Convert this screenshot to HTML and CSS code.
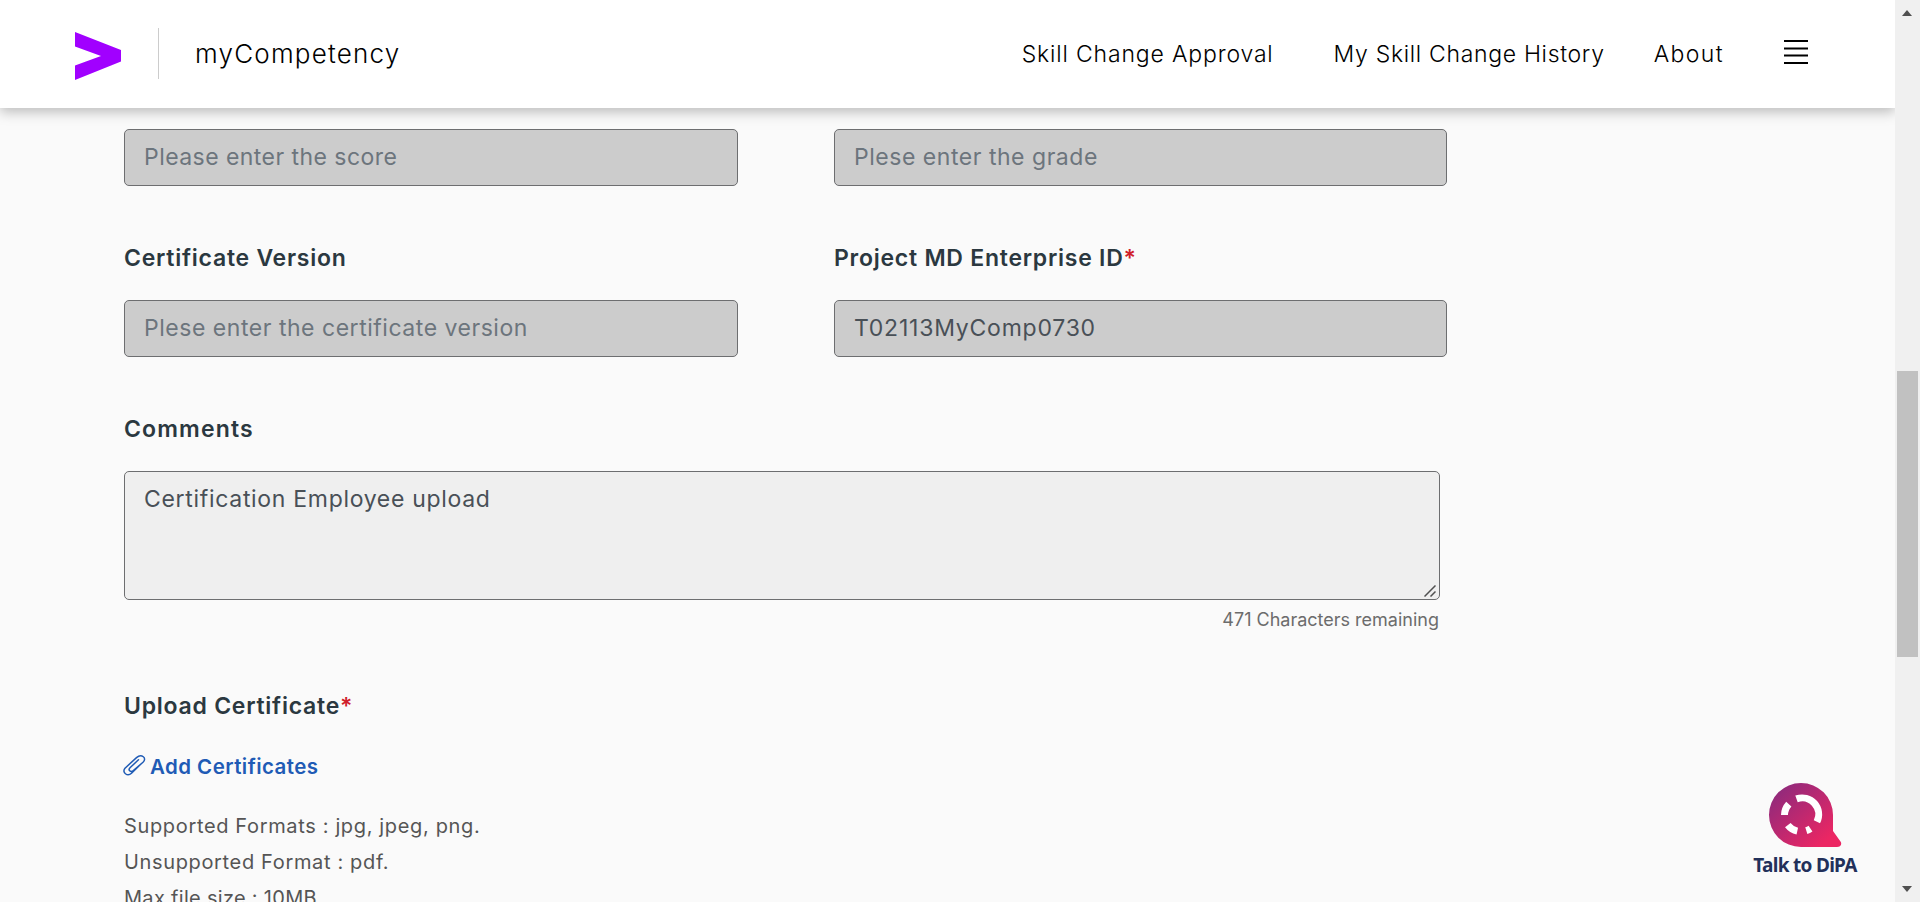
FILE: index.html
```html
<!DOCTYPE html>
<html lang="en">
<head>
<meta charset="utf-8">
<title>myCompetency</title>
<link rel="stylesheet" href="styles.css">
</head>
<body>
<div class="page">
  <header class="header">
    <svg class="logo" viewBox="0 0 46 48"><path fill="#a100ff" d="M0 0 46 18V29.500L0 48V33.500L26 24 0 14.500Z"/></svg>
    <span class="divider"></span>
    <span class="brand">myCompetency</span>
    <nav class="nav">
      <a class="nav-link approval">Skill Change Approval</a>
      <a class="nav-link history">My Skill Change History</a>
      <a class="nav-link about">About</a>
      <svg class="menu" viewBox="0 0 24 26"><path stroke="#000" stroke-width="2" d="M0 2H24M0 9.500H24M0 16.500H24M0 24H24"/></svg>
    </nav>
  </header>
  <main class="form">
    <div class="row">
      <input class="field score" placeholder="Please enter the score" disabled>
      <input class="field" placeholder="Plese enter the grade" disabled>
    </div>
    <div class="row labelled">
      <div class="group">
        <label class="label">Certificate Version</label>
        <input class="field" placeholder="Plese enter the certificate version" disabled>
      </div>
      <div class="group">
        <label class="label">Project MD Enterprise ID<span class="star">*</span></label>
        <input class="field value" value="T02113MyComp0730" disabled>
      </div>
    </div>
    <div class="group labelled">
      <label class="label comments">Comments</label>
      <div class="area-wrap">
        <textarea class="area" disabled>Certification Employee upload</textarea>
        <svg class="grip" viewBox="0 0 12 12"><path stroke="#505050" stroke-width="1.500" d="M.5 11.500 11.500.5M6.500 11.500 11.500 6.500"/></svg>
      </div>
      <div class="counter">471 Characters remaining</div>
    </div>
    <div class="upload">
      <label class="label">Upload Certificate<span class="star">*</span></label>
      <a class="add"><svg class="clip" viewBox="0 0 23 21"><g fill="none" stroke="#1f5bb5" stroke-width="1.500" stroke-linecap="round"><path d="M18.500 8.500 8.500 18.200C4.500 22-1.500 17.500 2 13.200L13.500 2.600C18.500-1.600 24.500 3 20 7.300L10.300 15.600C7.300 17.800 4.800 15 7 12.700L15.500 4.800"/></g></svg>Add Certificates</a>
      <p class="note">Supported Formats : jpg, jpeg, png.<br>Unsupported Format : pdf.<br><span class="size">Max file size : 10MB</span></p>
    </div>
  </main>
</div>
<aside class="scrollbar"><i class="up"></i><i class="thumb"></i><i class="down"></i></aside>
<div class="chat">
  <svg class="bubble" viewBox="0 0 74 66">
    <defs><linearGradient id="g" x1="0" y1="0" x2="1" y2="1"><stop offset=".1" stop-color="#8f2a7c"/><stop offset=".85" stop-color="#ec2663"/></linearGradient></defs>
    <path fill="url(#g)" d="M33 1a32 32 0 0 1 32 32V49L72.500 59.500C74.500 62.500 72 65 69 65H33A32 32 0 0 1 33 1Z"/>
    <g fill="none" stroke="#fff" stroke-width="7"><path d="M28.500 16.900A16.500 16.500 0 0 1 48.900 39.800M16.500 33A16.500 16.500 0 0 1 20.800 22.200M19.800 43.100A16.500 16.500 0 0 0 29.300 49.100M38.300 48.600A16.500 16.500 0 0 0 42.500 46.600"/></g>
  </svg>
  <span class="chat-text">Talk to DiPA</span>
</div>
</body>
</html>
```
FILE: styles.css
```css
*{box-sizing:border-box}
body{margin:0;height:902px;display:flex;overflow:hidden;background:#fafafa;font-family:Inter,"Liberation Sans",sans-serif}
.page{width:1895px;height:902px;overflow:hidden}
.header{height:108px;display:flex;align-items:center;padding-left:75px;background:#fff;box-shadow:0 4px 12px rgba(0,0,0,.25)}
.logo{width:46px;height:48px;margin-top:4px}
.divider{width:1px;height:51px;margin:0 0 1px 37px;background:#ccc}
.brand{margin:0 0 2px 36px;font-size:26px;font-weight:300;letter-spacing:1.22px;color:#000}
.nav{display:flex;align-items:center;margin-left:auto;padding-right:87px}
.nav-link{margin-bottom:1px;font-size:23px;font-weight:300;letter-spacing:.84px;color:#000;white-space:nowrap}
.history{margin-left:60px;letter-spacing:.68px}
.about{margin-left:49px;letter-spacing:1.4px}
.menu{width:24px;height:26px;margin:0 0 5px 60px}
.form{padding:21px 0 0 124px}
.row{display:flex;gap:96px}
.labelled{margin-top:57px}
.field{display:block;width:614px;height:57px;padding:0 19px 2px;border:1px solid #6d6e70;border-radius:5px;background:#ccc;font:400 23px Inter,sans-serif;letter-spacing:.53px;color:#495057}
.row>.field:last-child,.group:last-child>.field{width:613px}
.score{letter-spacing:.45px}
.value{letter-spacing:.77px}
.field::placeholder{color:#6c757d}
.label{display:block;height:30px;line-height:30px;margin-bottom:27px;font-size:23px;font-weight:600;letter-spacing:.75px;color:#2b3840}
.comments{letter-spacing:1.15px}
.star{color:#d0202a}
.area-wrap{position:relative;width:1316px}
.area{display:block;width:1316px;height:129px;padding:12px 19px;resize:none;border:1px solid #6d6e70;border-radius:5px;background:#efefef;font:400 23px/30px Inter,sans-serif;letter-spacing:.69px;color:#495057}
.grip{position:absolute;right:4px;bottom:3px;width:12px;height:12px}
.counter{width:1316px;margin-top:8px;padding-right:1px;height:24px;line-height:24px;text-align:right;font-size:18px;color:#6c6c6c}
.upload{margin-top:59px}
.add{display:flex;height:30px;margin-top:31px;line-height:30px;font-size:20.5px;font-weight:600;letter-spacing:.44px;color:#1f5bb5}
.clip{width:23px;height:21px;margin:3px 4px 0 -1px}
.note{margin:26px 0 0;font-size:20px;line-height:36px;letter-spacing:.65px;color:#555}
.size{letter-spacing:.3px}
.scrollbar{position:relative;width:25px;height:902px;background:#f0f0f0}
.thumb{position:absolute;left:2px;top:371px;width:21px;height:286px;background:#c1c1c1}
.up,.down{position:absolute;left:7px;border:5.5px solid transparent}
.up{top:10px;border-top:0;border-bottom:6px solid #505050}
.down{bottom:10px;border-bottom:0;border-top:6px solid #505050}
.chat{position:absolute;left:1753px;top:782px;width:104px;display:flex;flex-direction:column;align-items:center}
.bubble{width:74px;height:66px}
.chat-text{margin-top:4px;font:700 19px/26px "Noto Sans",sans-serif;letter-spacing:-.7px;color:#22305a;white-space:nowrap}
```
